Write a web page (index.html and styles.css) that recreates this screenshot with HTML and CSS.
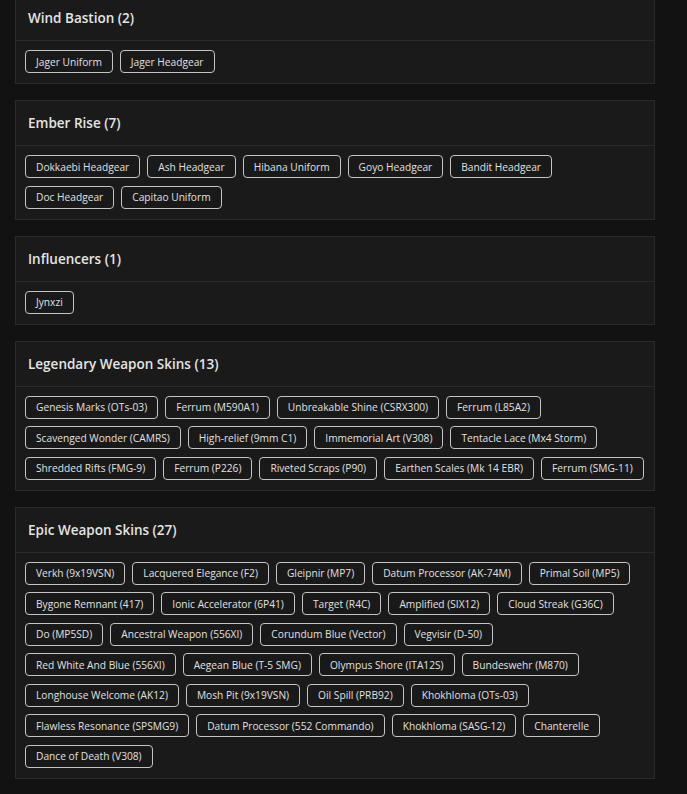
FILE: index.html
```html
<!DOCTYPE html>
<html lang="en">
<head>
<meta charset="utf-8">
<title>Unlocks</title>
<link rel="stylesheet" href="styles.css">
</head>
<body>
<main class="page">
  <section class="card">
    <header class="card-header"><h2 class="title">Wind Bastion (2)</h2></header>
    <div class="card-body">
      <span class="tag">Jager Uniform</span>
      <span class="tag">Jager Headgear</span>
    </div>
  </section>
  <section class="card">
    <header class="card-header"><h2 class="title">Ember Rise (7)</h2></header>
    <div class="card-body">
      <span class="tag">Dokkaebi Headgear</span>
      <span class="tag">Ash Headgear</span>
      <span class="tag">Hibana Uniform</span>
      <span class="tag">Goyo Headgear</span>
      <span class="tag">Bandit Headgear</span>
      <span class="tag">Doc Headgear</span>
      <span class="tag">Capitao Uniform</span>
    </div>
  </section>
  <section class="card">
    <header class="card-header"><h2 class="title">Influencers (1)</h2></header>
    <div class="card-body">
      <span class="tag">Jynxzi</span>
    </div>
  </section>
  <section class="card">
    <header class="card-header"><h2 class="title">Legendary Weapon Skins (13)</h2></header>
    <div class="card-body">
      <span class="tag">Genesis Marks (OTs-03)</span>
      <span class="tag">Ferrum (M590A1)</span>
      <span class="tag">Unbreakable Shine (CSRX300)</span>
      <span class="tag">Ferrum (L85A2)</span>
      <span class="tag">Scavenged Wonder (CAMRS)</span>
      <span class="tag">High-relief (9mm C1)</span>
      <span class="tag">Immemorial Art (V308)</span>
      <span class="tag">Tentacle Lace (Mx4 Storm)</span>
      <span class="tag">Shredded Rifts (FMG-9)</span>
      <span class="tag">Ferrum (P226)</span>
      <span class="tag">Riveted Scraps (P90)</span>
      <span class="tag">Earthen Scales (Mk 14 EBR)</span>
      <span class="tag">Ferrum (SMG-11)</span>
    </div>
  </section>
  <section class="card">
    <header class="card-header"><h2 class="title">Epic Weapon Skins (27)</h2></header>
    <div class="card-body">
      <span class="tag">Verkh (9x19VSN)</span>
      <span class="tag">Lacquered Elegance (F2)</span>
      <span class="tag">Gleipnir (MP7)</span>
      <span class="tag">Datum Processor (AK-74M)</span>
      <span class="tag">Primal Soil (MP5)</span>
      <span class="tag">Bygone Remnant (417)</span>
      <span class="tag">Ionic Accelerator (6P41)</span>
      <span class="tag">Target (R4C)</span>
      <span class="tag">Amplified (SIX12)</span>
      <span class="tag">Cloud Streak (G36C)</span>
      <span class="tag">Do (MP5SD)</span>
      <span class="tag">Ancestral Weapon (556XI)</span>
      <span class="tag">Corundum Blue (Vector)</span>
      <span class="tag">Vegvisir (D-50)</span>
      <span class="tag">Red White And Blue (556XI)</span>
      <span class="tag">Aegean Blue (T-5 SMG)</span>
      <span class="tag">Olympus Shore (ITA12S)</span>
      <span class="tag">Bundeswehr (M870)</span>
      <span class="tag">Longhouse Welcome (AK12)</span>
      <span class="tag">Mosh Pit (9x19VSN)</span>
      <span class="tag">Oil Spill (PRB92)</span>
      <span class="tag">Khokhloma (OTs-03)</span>
      <span class="tag">Flawless Resonance (SPSMG9)</span>
      <span class="tag">Datum Processor (552 Commando)</span>
      <span class="tag">Khokhloma (SASG-12)</span>
      <span class="tag">Chanterelle</span>
      <span class="tag">Dance of Death (V308)</span>
    </div>
  </section>
</main>
</body>
</html>
```

FILE: styles.css
```css
html, body {
  margin: 0;
  padding: 0;
  background: #121212;
  font-family: "Open Sans", "Noto Sans", sans-serif;
}

.page {
  width: 640px;
  margin: -5px 0 0 15px;
  display: flex;
  flex-direction: column;
  gap: 16px;
}

.card {
  background: #1a1a1a;
  border: 1px solid #2a2a2a;
}

.card-header {
  height: 44px;
  padding: 0 12px;
  display: flex;
  align-items: center;
  border-bottom: 1px solid #2a2a2a;
}

.title {
  margin: 0;
  font-size: 13.5px;
  font-weight: 600;
  color: #e4e4e4;
}

.card-body {
  padding: 9px 9px 10px;
  display: flex;
  flex-wrap: wrap;
  gap: 7.5px 7px;
}

.tag {
  box-sizing: border-box;
  height: 23px;
  padding: 0 10px;
  display: flex;
  align-items: center;
  border: 1px solid #c4c4c4;
  border-radius: 4px;
  background: #191919;
  color: #e0e0e0;
  font-size: 10.2px;
  white-space: nowrap;
}
```
